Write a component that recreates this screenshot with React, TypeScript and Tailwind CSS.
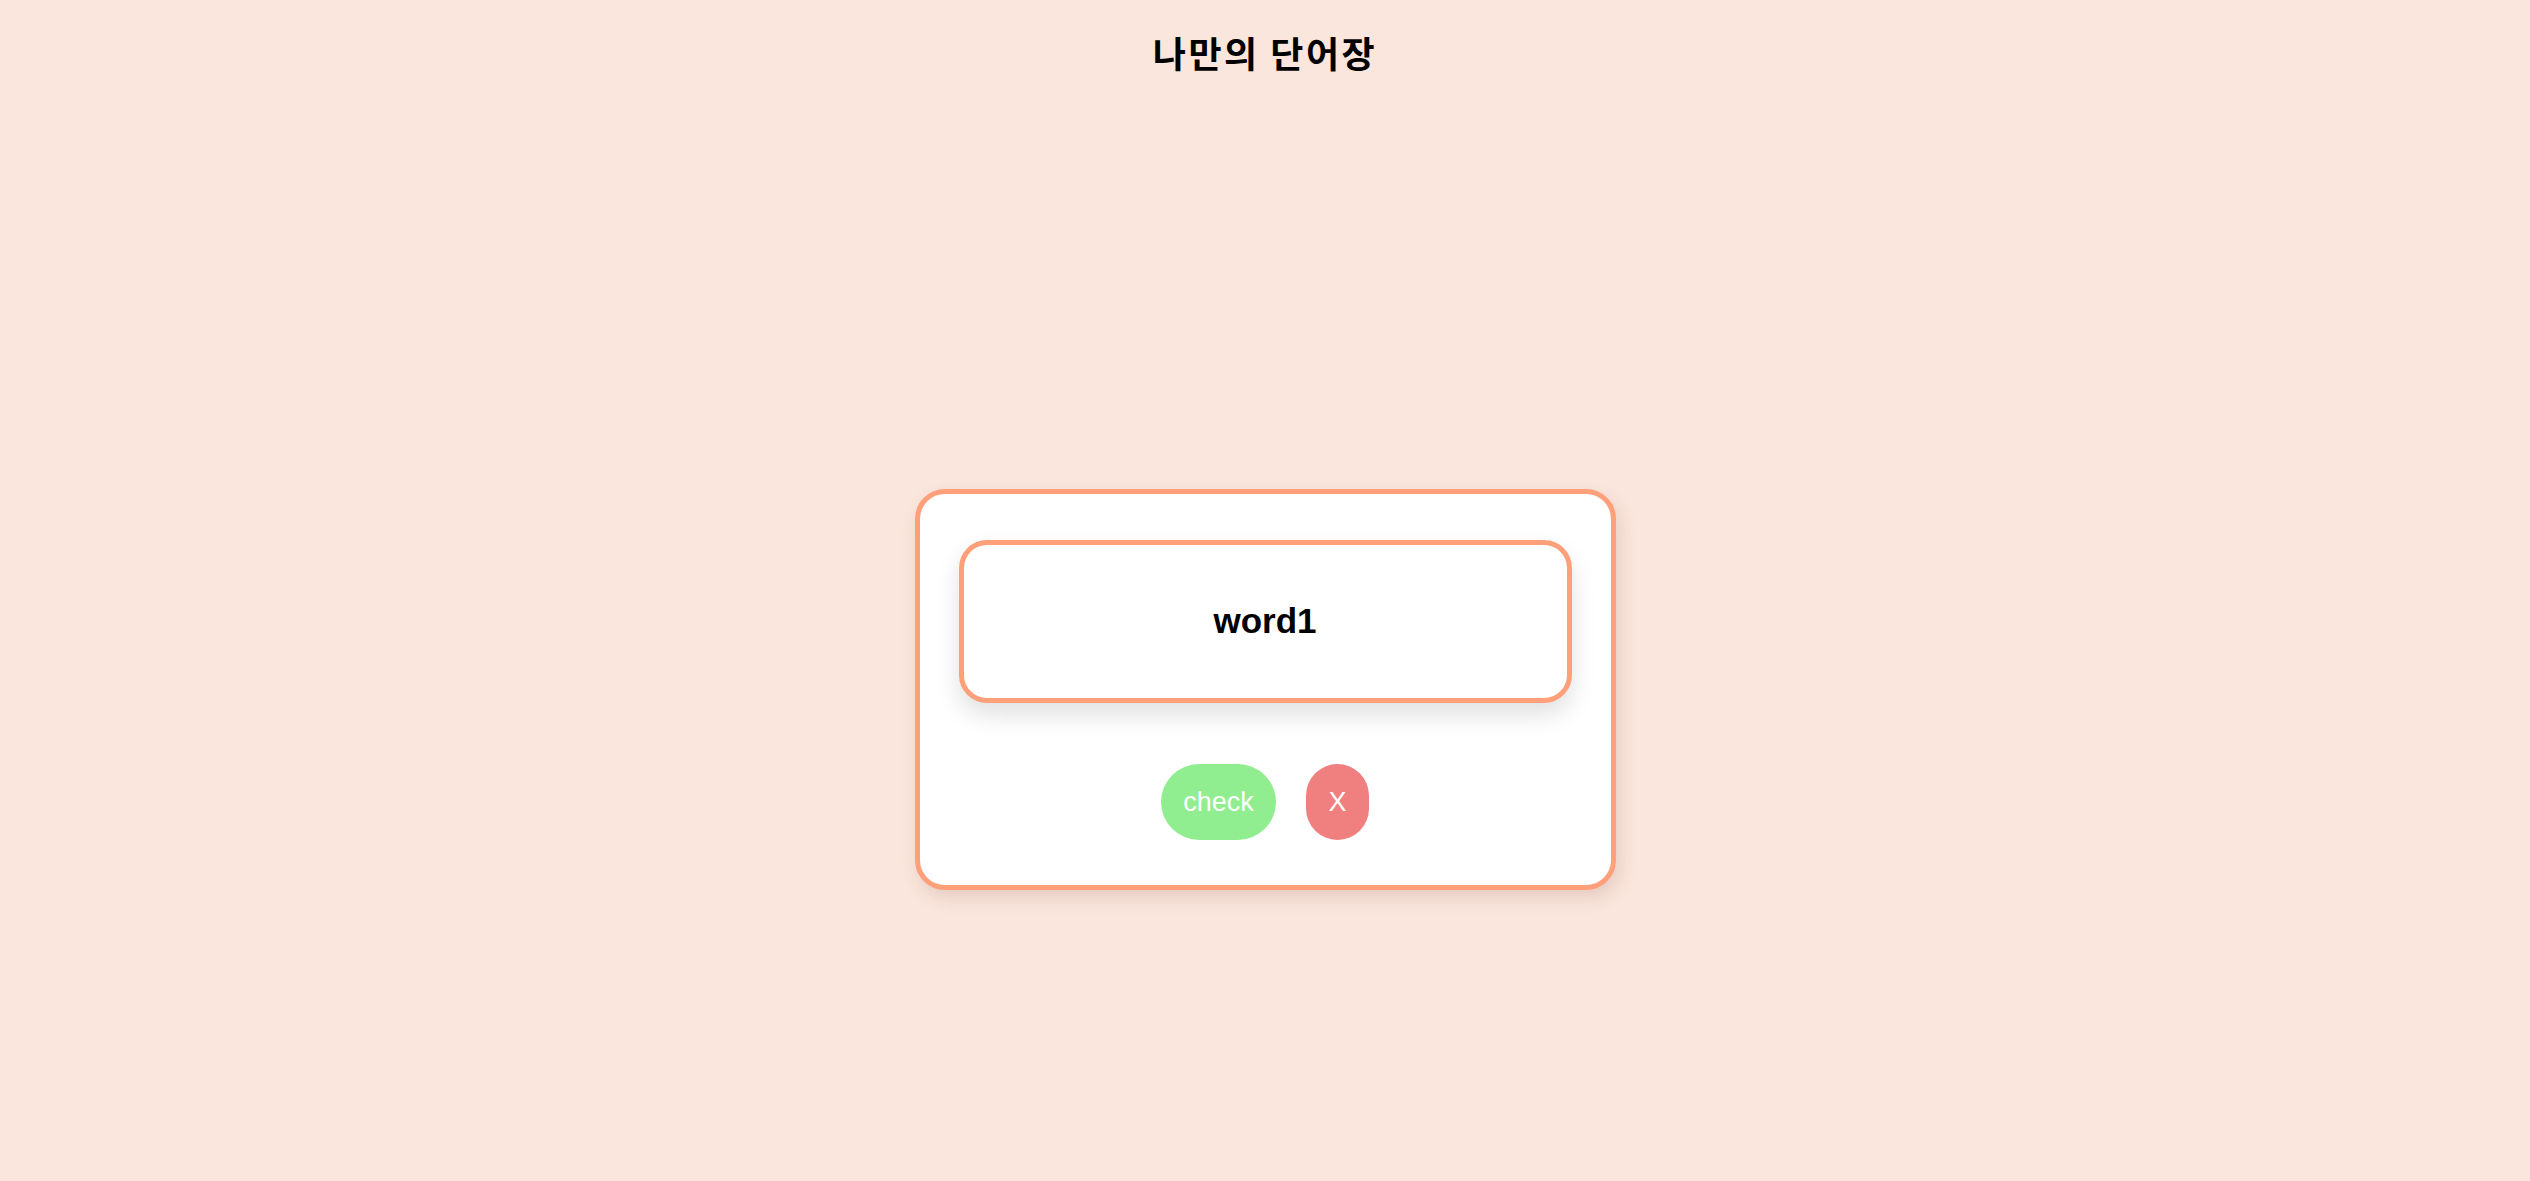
import React from "react";

// ─── word card ────────────────────────────────────────────────────────────
const WordCard = ({ word }: { word: string }) => (
  <div className="flex h-[163px] items-center justify-center rounded-[28px] border-[5px] border-[#ffa07a] bg-white shadow-[0_12px_24px_rgba(0,0,0,0.12)]">
    <span className="text-[35px] font-bold text-black">{word}</span>
  </div>
);

// ─── page ─────────────────────────────────────────────────────────────────
export default function App() {
  return (
    <div className="flex min-h-screen flex-col items-center bg-[#fae6dd] font-['Liberation_Sans',Arial,sans-serif]">
      <header className="flex h-[104px] items-center pb-[1px]">
        <h1 className="font-['Noto_Sans_CJK_KR',sans-serif] text-[36px] font-bold leading-none tracking-[2.5px] text-black">
          나만의 단어장
        </h1>
      </header>

      <div className="mt-[385px] w-[701px] rounded-[30px] border-[5px] border-[#ffa07a] bg-white px-[39px] pb-[45px] pt-[46px] shadow-[4px_8px_18px_rgba(120,60,40,0.15)]">
        <WordCard word="word1" />

        <div className="mt-[61px] flex justify-center gap-[30px]">
          <button className="h-[76px] w-[115px] rounded-full bg-[#90ee90] text-[27px] text-white">
            check
          </button>
          <button className="h-[76px] w-[63px] rounded-full bg-[#f08080] text-[27px] text-white">
            X
          </button>
        </div>
      </div>
    </div>
  );
}
